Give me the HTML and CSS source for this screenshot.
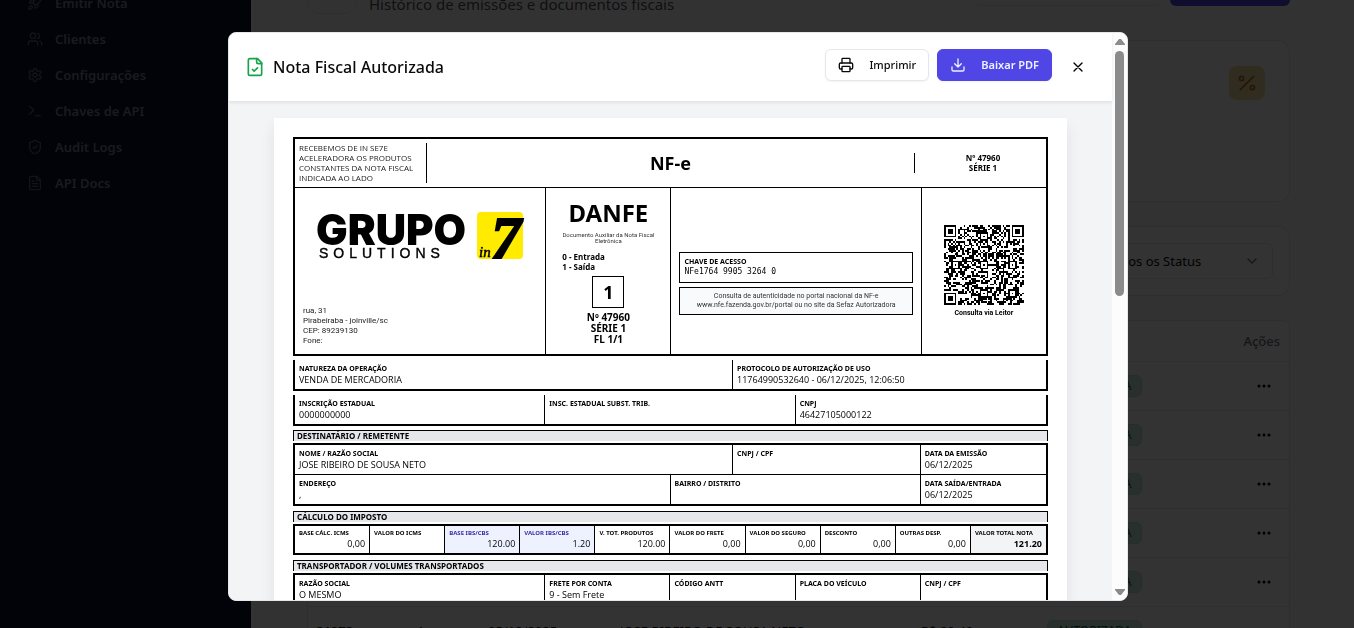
FILE: index.html
```html
<!DOCTYPE html>
<html lang="pt-BR">
<head>
<meta charset="utf-8">
<title>Nota Fiscal Autorizada</title>
<link rel="stylesheet" href="styles.css">
</head>
<body>
<div class="app">
  <nav class="sidebar">
    <a class="nav-link" href="#"><svg class="ico" viewBox="0 0 24 24"><path d="M4.5 16.500c-1.500 1.260-2 5-2 5s3.740-.5 5-2c.71-.84.7-2.130-.09-2.910a2.180 2.180 0 0 0-2.910-.09z"/><path d="m12 15-3-3a22 22 0 0 1 2-3.950A12.880 12.880 0 0 1 22 2c0 2.720-.78 7.500-6 11a22.350 22.350 0 0 1-4 2z"/><path d="M9 12H4s.55-3.030 2-4c1.620-1.080 5 0 5 0M12 15v5s3.030-.55 4-2c1.080-1.620 0-5 0-5"/></svg>Emitir Nota</a>
    <a class="nav-link" href="#"><svg class="ico" viewBox="0 0 24 24"><path d="M16 21v-2a4 4 0 0 0-4-4H6a4 4 0 0 0-4 4v2"/><circle cx="9" cy="7" r="4"/><path d="M22 21v-2a4 4 0 0 0-3-3.870M16 3.130a4 4 0 0 1 0 7.750"/></svg>Clientes</a>
    <a class="nav-link" href="#"><svg class="ico" viewBox="0 0 24 24"><path d="M12.220 2h-.44a2 2 0 0 0-2 2v.18a2 2 0 0 1-1 1.730l-.43.25a2 2 0 0 1-2 0l-.15-.08a2 2 0 0 0-2.730.73l-.22.38a2 2 0 0 0 .73 2.730l.15.1a2 2 0 0 1 1 1.720v.51a2 2 0 0 1-1 1.740l-.15.09a2 2 0 0 0-.73 2.730l.22.38a2 2 0 0 0 2.730.73l.15-.08a2 2 0 0 1 2 0l.43.25a2 2 0 0 1 1 1.730V20a2 2 0 0 0 2 2h.44a2 2 0 0 0 2-2v-.18a2 2 0 0 1 1-1.730l.43-.25a2 2 0 0 1 2 0l.15.08a2 2 0 0 0 2.730-.73l.22-.39a2 2 0 0 0-.73-2.730l-.15-.08a2 2 0 0 1-1-1.740v-.5a2 2 0 0 1 1-1.740l.15-.09a2 2 0 0 0 .73-2.730l-.22-.38a2 2 0 0 0-2.730-.73l-.15.08a2 2 0 0 1-2 0l-.43-.25a2 2 0 0 1-1-1.730V4a2 2 0 0 0-2-2z"/><circle cx="12" cy="12" r="3"/></svg>Configurações</a>
    <a class="nav-link" href="#"><svg class="ico" viewBox="0 0 24 24"><path d="m4 17 6-6-6-6M12 19h8"/></svg>Chaves de API</a>
    <a class="nav-link" href="#"><svg class="ico" viewBox="0 0 24 24"><path d="M20 13c0 5-3.500 7.500-7.660 8.950a1 1 0 0 1-.67-.01C7.500 20.500 4 18 4 13V6a1 1 0 0 1 1-1c2 0 4.500-1.200 6.240-2.720a1.170 1.170 0 0 1 1.520 0C14.510 3.810 17 5 19 5a1 1 0 0 1 1 1z"/><path d="m9 12 2 2 4-4"/></svg>Audit Logs</a>
    <a class="nav-link" href="#"><svg class="ico" viewBox="0 0 24 24"><path d="M15 2H6a2 2 0 0 0-2 2v16a2 2 0 0 0 2 2h12a2 2 0 0 0 2-2V7z"/><path d="M14 2v4a2 2 0 0 0 2 2h4M10 9H8M16 13H8M16 17H8"/></svg>API Docs</a>
  </nav>
  <main class="content">
    <header class="page-head">
      <div class="page-icon"></div>
      <p class="page-sub">Histórico de emissões e documentos fiscais</p>
      <div class="head-ghost"></div>
      <div class="head-primary"></div>
    </header>
    <section class="card stat">
      <div class="stat-icon"><svg class="ico" viewBox="0 0 24 24"><path d="M20 4 4 20"/><circle cx="5.500" cy="6.500" r="2.500"/><circle cx="18.500" cy="17.500" r="2.500"/></svg></div>
    </section>
    <section class="card filter">
      <div class="select-wrap">
        <select class="select" aria-label="Status"><option>Todos os Status</option></select>
        <svg class="ico chevron" viewBox="0 0 24 24"><path d="m6 9 6 6 6-6"/></svg>
      </div>
    </section>
    <section class="card list">
      <table class="notes">
        <colgroup><col class="c-num"><col class="c-ser"><col class="c-date"><col class="c-name"><col class="c-val"><col class="c-stat"><col></colgroup>
        <thead><tr><th></th><th></th><th></th><th></th><th></th><th></th><th class="acts">Ações</th></tr></thead>
        <tbody>
          <tr><td></td><td></td><td></td><td></td><td></td><td><span class="badge">AUTORIZADA</span></td><td class="dots"><svg viewBox="0 0 16 16"><circle cx="3" cy="8" r="1.500"/><circle cx="8" cy="8" r="1.500"/><circle cx="13" cy="8" r="1.500"/></svg></td></tr>
          <tr><td></td><td></td><td></td><td></td><td></td><td><span class="badge">AUTORIZADA</span></td><td class="dots"><svg viewBox="0 0 16 16"><circle cx="3" cy="8" r="1.500"/><circle cx="8" cy="8" r="1.500"/><circle cx="13" cy="8" r="1.500"/></svg></td></tr>
          <tr><td></td><td></td><td></td><td></td><td></td><td><span class="badge">AUTORIZADA</span></td><td class="dots"><svg viewBox="0 0 16 16"><circle cx="3" cy="8" r="1.500"/><circle cx="8" cy="8" r="1.500"/><circle cx="13" cy="8" r="1.500"/></svg></td></tr>
          <tr><td></td><td></td><td></td><td></td><td></td><td><span class="badge">AUTORIZADA</span></td><td class="dots"><svg viewBox="0 0 16 16"><circle cx="3" cy="8" r="1.500"/><circle cx="8" cy="8" r="1.500"/><circle cx="13" cy="8" r="1.500"/></svg></td></tr>
          <tr><td></td><td></td><td></td><td></td><td></td><td><span class="badge">AUTORIZADA</span></td><td class="dots"><svg viewBox="0 0 16 16"><circle cx="3" cy="8" r="1.500"/><circle cx="8" cy="8" r="1.500"/><circle cx="13" cy="8" r="1.500"/></svg></td></tr>
          <tr><td class="strong">21973</td><td>1</td><td>05/12/2025</td><td>JOSE RIBEIRO DE SOUSA NETO</td><td>R$ 20,40</td><td><span class="badge">AUTORIZADA</span></td><td></td></tr>
        </tbody>
      </table>
    </section>
  </main>
</div>

<div class="overlay">
  <div class="modal" role="dialog" aria-labelledby="dlg-title">
    <div class="modal-main">
      <header class="modal-head">
        <svg class="ico file" viewBox="0 0 24 24"><path d="M15 2H6a2 2 0 0 0-2 2v16a2 2 0 0 0 2 2h12a2 2 0 0 0 2-2V7z"/><path d="M14 2v4a2 2 0 0 0 2 2h4M9 15l2 2 4-4"/></svg>
        <h2 class="modal-title" id="dlg-title">Nota Fiscal Autorizada</h2>
        <button class="btn" type="button"><svg class="ico" viewBox="0 0 24 24"><path d="M6 18H4a2 2 0 0 1-2-2v-5a2 2 0 0 1 2-2h16a2 2 0 0 1 2 2v5a2 2 0 0 1-2 2h-2"/><path d="M6 9V3a1 1 0 0 1 1-1h10a1 1 0 0 1 1 1v6"/><rect x="6" y="14" width="12" height="8" rx="1"/></svg>Imprimir</button>
        <button class="btn btn-primary" type="button"><svg class="ico" viewBox="0 0 24 24"><path d="M21 15v4a2 2 0 0 1-2 2H5a2 2 0 0 1-2-2v-4M7 10l5 5 5-5M12 15V3"/></svg>Baixar PDF</button>
        <button class="close" type="button" aria-label="Fechar"><svg class="ico" viewBox="0 0 24 24"><path d="M18 6 6 18M6 6l12 12"/></svg></button>
      </header>
      <div class="modal-body">
        <article class="paper">
          <section class="frame">
            <div class="receipt">
              <p class="receipt-text">RECEBEMOS DE IN SE7E ACELERADORA OS PRODUTOS CONSTANTES DA NOTA FISCAL INDICADA AO LADO</p>
              <p class="receipt-title">NF-e</p>
              <p class="receipt-num">Nº 47960<br>SÉRIE 1</p>
            </div>
            <div class="ident">
              <div class="issuer">
                <svg class="logo" viewBox="0 0 210 50" role="img" aria-label="Grupo Solutions in7">
                  <text class="logo-main" x="1" y="34">GRUPO</text>
                  <text class="logo-sub" x="4" y="47">SOLUTIONS</text>
                  <rect x="162" y="1" width="46" height="47" rx="4" fill="#ffeb00"/>
                  <text class="logo-seven" x="176" y="47">7</text>
                  <text class="logo-in" x="164" y="46">in</text>
                </svg>
                <p class="address">rua, 31<br>Pirabeiraba - joinville/sc<br>CEP: 89239130<br>Fone:</p>
              </div>
              <div class="danfe">
                <h3 class="danfe-title">DANFE</h3>
                <p class="danfe-sub">Documento Auxiliar da Nota Fiscal<br>Eletrônica</p>
                <p class="danfe-kind">0 - Entrada<br>1 - Saída</p>
                <p class="danfe-box">1</p>
                <p class="danfe-num">Nº 47960<br>SÉRIE 1<br>FL 1/1</p>
              </div>
              <div class="access">
                <div class="key"><p class="key-label">CHAVE DE ACESSO</p><p class="key-value">NFe1764 9905 3264 0</p></div>
                <p class="check">Consulta de autenticidade no portal nacional da NF-e<br>www.nfe.fazenda.gov.br/portal ou no site da Sefaz Autorizadora</p>
              </div>
              <div class="qr-cell">
                <svg class="qr" id="qr" viewBox="0 0 45 45" role="img" aria-label="QR Code"></svg>
                <p class="qr-label">Consulta via Leitor</p>
              </div>
            </div>
          </section>

          <dl class="strip">
            <div class="cell s7"><dt>NATUREZA DA OPERAÇÃO</dt><dd>VENDA DE MERCADORIA</dd></div>
            <div class="cell s5"><dt>PROTOCOLO DE AUTORIZAÇÃO DE USO</dt><dd>11764990532640 - 06/12/2025, 12:06:50</dd></div>
          </dl>
          <dl class="strip">
            <div class="cell s4"><dt>INSCRIÇÃO ESTADUAL</dt><dd>0000000000</dd></div>
            <div class="cell s4"><dt>INSC. ESTADUAL SUBST. TRIB.</dt><dd></dd></div>
            <div class="cell s4"><dt>CNPJ</dt><dd>46427105000122</dd></div>
          </dl>

          <h4 class="band">DESTINATÁRIO / REMETENTE</h4>
          <dl class="block">
            <div class="cell s7 line"><dt>NOME / RAZÃO SOCIAL</dt><dd>JOSE RIBEIRO DE SOUSA NETO</dd></div>
            <div class="cell s3 line"><dt>CNPJ / CPF</dt><dd></dd></div>
            <div class="cell s2 line last"><dt>DATA DA EMISSÃO</dt><dd>06/12/2025</dd></div>
            <div class="cell s6"><dt>ENDEREÇO</dt><dd>,</dd></div>
            <div class="cell s4"><dt>BAIRRO / DISTRITO</dt><dd></dd></div>
            <div class="cell s2"><dt>DATA SAÍDA/ENTRADA</dt><dd>06/12/2025</dd></div>
          </dl>

          <h4 class="band">CÁLCULO DO IMPOSTO</h4>
          <dl class="block taxes">
            <div class="cell"><dt>BASE CÁLC. ICMS</dt><dd>0,00</dd></div>
            <div class="cell"><dt>VALOR DO ICMS</dt><dd></dd></div>
            <div class="cell ibs"><dt>BASE IBS/CBS</dt><dd>120.00</dd></div>
            <div class="cell ibs"><dt>VALOR IBS/CBS</dt><dd>1.20</dd></div>
            <div class="cell"><dt>V. TOT. PRODUTOS</dt><dd>120.00</dd></div>
            <div class="cell"><dt>VALOR DO FRETE</dt><dd>0,00</dd></div>
            <div class="cell"><dt>VALOR DO SEGURO</dt><dd>0,00</dd></div>
            <div class="cell"><dt>DESCONTO</dt><dd>0,00</dd></div>
            <div class="cell"><dt>OUTRAS DESP.</dt><dd>0,00</dd></div>
            <div class="cell total"><dt>VALOR TOTAL NOTA</dt><dd>121.20</dd></div>
          </dl>

          <h4 class="band">TRANSPORTADOR / VOLUMES TRANSPORTADOS</h4>
          <dl class="block">
            <div class="cell s4"><dt>RAZÃO SOCIAL</dt><dd>O MESMO</dd></div>
            <div class="cell s2"><dt>FRETE POR CONTA</dt><dd>9 - Sem Frete</dd></div>
            <div class="cell s2"><dt>CÓDIGO ANTT</dt><dd></dd></div>
            <div class="cell s2"><dt>PLACA DO VEÍCULO</dt><dd></dd></div>
            <div class="cell s2"><dt>CNPJ / CPF</dt><dd></dd></div>
          </dl>
        </article>
      </div>
    </div>
    <div class="scrollbar">
      <svg class="arrow" viewBox="0 0 10 8"><path d="M4 1h2l4 5v1H0V6z"/></svg>
      <div class="track"><div class="thumb"></div></div>
      <svg class="arrow" viewBox="0 0 10 8"><path d="M4 7h2l4-5V1H0v1z"/></svg>
    </div>
  </div>
</div>
<script src="qr.js"></script>
</body>
</html>
```
FILE: styles.css
```css
* { box-sizing: border-box; }
body, p, h2, h3, h4, dl, dd { margin: 0; }
body {
  height: 100vh;
  overflow: hidden;
  font-family: "Noto Sans", "Open Sans", sans-serif;
  font-size: 13px;
  color: #0a0a0a;
  background: #fafafa;
}
.ico {
  width: 16px;
  height: 16px;
  flex: none;
  fill: none;
  stroke: currentColor;
  stroke-width: 2;
  stroke-linecap: round;
  stroke-linejoin: round;
}

/* Page behind the dialog */
.app { display: flex; height: 100vh; overflow: hidden; }
.sidebar {
  width: 251px;
  flex: none;
  margin-top: -15px;
  padding: 0 27px;
  background: #0a0f28;
}
.nav-link {
  display: flex;
  align-items: center;
  gap: 12px;
  height: 36px;
  font-weight: 600;
  color: #7c8494;
  text-decoration: none;
}
.nav-link .ico { opacity: 0.7; }
.content { flex: 1; padding: 0 64px 0 56px; }
.page-head {
  display: flex;
  align-items: flex-end;
  gap: 8px;
  height: 40px;
  margin-top: -26px;
}
.page-icon { width: 50px; height: 40px; margin-right: 4px; border: 1px solid #e5e7eb; border-radius: 12px; }
.page-sub { flex: 1; font-size: 15px; line-height: 20px; color: #52525b; }
.head-ghost, .head-primary { height: 36px; margin-bottom: 8px; border-radius: 6px; }
.head-ghost { width: 188px; border: 1px solid #e5e7eb; }
.head-primary { width: 120px; background: #4f46e5; }
.card { border: 1px solid #e7e7ea; border-radius: 12px; background: #fcfcfc; }
.stat { display: flex; justify-content: flex-end; height: 162px; margin-top: 26px; padding: 25px 24px; }
.stat-icon {
  display: grid;
  place-items: center;
  width: 36px;
  height: 34px;
  border-radius: 8px;
  background: #f0dea0;
  color: #b86a10;
}
.stat-icon .ico { width: 20px; height: 20px; }
.filter { display: flex; justify-content: flex-end; margin-top: 24px; padding: 16px; }
.select-wrap { position: relative; width: 180px; }
.select {
  appearance: none;
  width: 100%;
  height: 36px;
  padding: 0 12px;
  border: 1px solid #e5e7eb;
  border-radius: 6px;
  background: transparent;
  font: inherit;
  color: #0a0a0a;
}
.chevron { position: absolute; right: 13px; top: 10px; color: #71717a; }
.list { margin-top: 24px; border-radius: 6px; }
.notes { width: 100%; table-layout: fixed; border-collapse: collapse; }
.notes th { height: 40px; padding: 0 9px; font-weight: 500; color: #71717a; }
.notes td { height: 49px; padding: 0 8px; }
.notes tr { border-bottom: 1px solid #e7e7ea; }
.c-num { width: 101px; }
.c-ser { width: 71px; }
.c-date { width: 132px; }
.c-name { width: 301px; }
.c-val { width: 126px; }
.c-stat { width: 140px; }
.notes .acts { text-align: right; }
.notes .dots { padding-right: 17px; text-align: right; line-height: 0; }
.dots svg { width: 16px; height: 16px; }
.strong { font-weight: 600; }
.badge {
  display: inline-block;
  padding: 0 9px;
  border: 1px solid #b4e4d0;
  border-radius: 6px;
  background: #cdebdd;
  font-size: 12px;
  line-height: 20px;
  color: #065f46;
}

/* Dialog */
.overlay {
  position: fixed;
  inset: 0;
  display: flex;
  justify-content: center;
  padding: 32px 0 27px 2px;
  background: rgba(0, 0, 0, 0.8);
}
.modal {
  display: flex;
  width: 100%;
  max-width: 900px;
  border: 1px solid #e5e7eb;
  border-radius: 8px;
  overflow: hidden;
  background: #fff;
}
.modal-main { flex: 1; display: flex; flex-direction: column; min-width: 0; }
.modal-head {
  display: flex;
  align-items: center;
  gap: 8px;
  flex: none;
  padding: 16px;
  border-bottom: 1px solid #e5e7eb;
  box-shadow: 0 1px 3px rgba(0, 0, 0, 0.08);
  z-index: 1;
}
.file { width: 20px; height: 20px; color: #16a34a; }
.modal-title { flex: 1; font-size: 16px; line-height: 24px; font-weight: 500; }
.btn {
  display: flex;
  align-items: center;
  gap: 15px;
  height: 32px;
  margin-bottom: 4px;
  padding: 0 12px;
  border: 1px solid #e5e7eb;
  border-radius: 6px;
  background: #fff;
  box-shadow: 0 1px 2px rgba(0, 0, 0, 0.05);
  font: 500 11px/16px "Noto Sans", sans-serif;
  color: #0a0a0a;
}
.btn-primary { border-color: #4f46e5; background: #4f46e5; color: #eef2ff; font-weight: 600; }
.close {
  display: grid;
  place-items: center;
  width: 36px;
  height: 36px;
  padding: 0;
  border: 0;
  background: none;
}
.modal-body { flex: 1; min-height: 0; padding: 16px; overflow: hidden; background: #f3f4f6; }
.scrollbar {
  display: flex;
  flex-direction: column;
  align-items: center;
  width: 15px;
  padding: 5px 0 4px;
  background: #fcfcfc;
}
.arrow { width: 10px; height: 8px; fill: #8b8b8b; }
.track { flex: 1; width: 9px; padding: 5px 0; }
.thumb { height: 46%; border-radius: 5px; background: #8b8b8b; }

/* DANFE sheet */
.paper {
  max-width: 793px;
  margin: 0 auto;
  padding: 19px;
  background: #fff;
  box-shadow: 0 8px 14px rgba(0, 0, 0, 0.08);
  color: #000;
}
.frame { margin-bottom: 4px; border: 2px solid #000; }
.receipt {
  display: grid;
  grid-template-columns: 128px 1fr 128px;
  align-items: center;
  padding: 4px;
  border-bottom: 1px solid #000;
}
.receipt-text { border-right: 1px solid #000; font: 8px/10px "Open Sans", sans-serif; color: #222; }
.receipt-title { text-align: center; font-size: 18px; line-height: 24px; font-weight: 700; }
.receipt-num { border-left: 1px solid #000; padding-left: 9px; text-align: center; font-size: 8px; line-height: 10px; font-weight: 700; }
.ident { display: grid; grid-template-columns: 4fr 2fr 4fr 2fr; }
.ident > * + * { border-left: 1px solid #000; }
.issuer { display: flex; flex-direction: column; justify-content: space-between; padding: 23px 8px 8px; }
.logo { align-self: center; width: 210px; height: 50px; }
.logo-main { font: 900 42px Inter, sans-serif; }
.logo-sub { font: 14px "Liberation Sans", sans-serif; letter-spacing: 5px; stroke: #000; stroke-width: 0.4; }
.logo-seven { font: italic 700 60px "Liberation Serif", serif; stroke: #000; stroke-width: 2; }
.logo-in { font: italic 15px "Liberation Serif", serif; stroke: #000; stroke-width: 0.5; }
.address { font: 8px/10px Roboto, sans-serif; color: #222; }
.danfe { display: flex; flex-direction: column; align-items: center; padding: 8px 8px 9px; text-align: center; }
.danfe-title { font-size: 24px; line-height: 34px; font-weight: 700; }
.danfe-sub { margin: 2px 0 8px; font: 6px/6px Roboto, sans-serif; color: #333; }
.danfe-kind { align-self: stretch; padding-left: 8px; text-align: left; font-size: 8px; line-height: 10px; font-weight: 700; }
.danfe-box { width: 32px; margin: 4px 0; border: 1px solid #000; font-size: 18px; line-height: 30px; font-weight: 700; }
.danfe-num { font-size: 10px; line-height: 11px; font-weight: 700; }
.access { display: flex; flex-direction: column; justify-content: center; gap: 4px; padding: 33px 8px 8px; }
.key { padding: 4px; border: 1px solid #000; }
.key-label { font-size: 7px; line-height: 9px; font-weight: 700; }
.key-value { font: 8px/12px "DejaVu Sans Mono", monospace; }
.check { padding: 4px 2px; border: 1px solid #000; background: #f9fafb; text-align: center; font: 7px/9px Roboto, sans-serif; color: #333; white-space: nowrap; }
.qr-cell { display: flex; flex-direction: column; align-items: center; justify-content: center; gap: 4px; }
.qr { width: 80px; height: 80px; shape-rendering: crispEdges; }
.qr-label { font: 700 7px/9px Roboto, sans-serif; }

.strip, .block { display: grid; grid-template-columns: repeat(12, 1fr); border: 2px solid #000; }
.strip { margin-bottom: 4px; border-top: 0; }
.block { margin-bottom: 5px; }
.cell { padding: 4px; border-right: 1px solid #000; }
.cell:last-child, .last { border-right: 0; }
.line { border-bottom: 1px solid #000; }
.cell dt { font-size: 7px; line-height: 10px; font-weight: 700; white-space: nowrap; }
.cell dd { min-height: 11px; font: 9px/11px "Open Sans", sans-serif; }
.s2 { grid-column: span 2; }
.s3 { grid-column: span 3; }
.s4 { grid-column: span 4; }
.s5 { grid-column: span 5; }
.s6 { grid-column: span 6; }
.s7 { grid-column: span 7; }
.band {
  margin-bottom: 2px;
  padding: 0 3px;
  border: 1px solid #000;
  border-bottom: 0;
  background: #e5e7eb;
  font-size: 8px;
  line-height: 10px;
  font-weight: 700;
}
.taxes { grid-template-columns: repeat(10, 1fr); }
.taxes .cell { padding: 3px 4px; }
.taxes .cell dt { font-size: 6px; line-height: 9px; }
.taxes .cell dd { line-height: 12px; text-align: right; }
.ibs { background: #eef2ff; }
.ibs dt { color: #3730a3; }
.total { background: #f3f4f6; }
.taxes .total dd { font-weight: 700; }
```
FILE: qr.js
```javascript
// Draws the 45-module code: data modules, timing lines, finders and alignment marks.
(function () {
  var n = 45, grid = [], seed = 47960, x, y;
  function next() {
    seed = (seed * 48271) % 2147483647;
    return seed / 2147483647;
  }
  for (y = 0; y < n; y++) {
    grid.push([]);
    for (x = 0; x < n; x++) grid[y].push(next() < 0.52);
  }
  for (x = 0; x < n; x++) grid[6][x] = grid[x][6] = x % 2 === 0;
  function mark(cx, cy, r) {
    for (var dy = -r; dy <= r; dy++) {
      for (var dx = -r; dx <= r; dx++) {
        var d = Math.max(Math.abs(dx), Math.abs(dy));
        if (grid[cy + dy] && cx + dx >= 0 && cx + dx < n) {
          grid[cy + dy][cx + dx] = r === 4 ? d < 2 || d === 3 : d !== 1;
        }
      }
    }
  }
  [[3, 3], [41, 3], [3, 41]].forEach(function (p) { mark(p[0], p[1], 4); });
  [[22, 6], [6, 22], [22, 22], [38, 22], [22, 38], [38, 38]].forEach(function (p) { mark(p[0], p[1], 2); });
  var d = "";
  for (y = 0; y < n; y++) for (x = 0; x < n; x++) if (grid[y][x]) d += "M" + x + " " + y + "h1v1h-1z";
  var path = document.createElementNS("http://www.w3.org/2000/svg", "path");
  path.setAttribute("d", d);
  document.getElementById("qr").appendChild(path);
})();
```
